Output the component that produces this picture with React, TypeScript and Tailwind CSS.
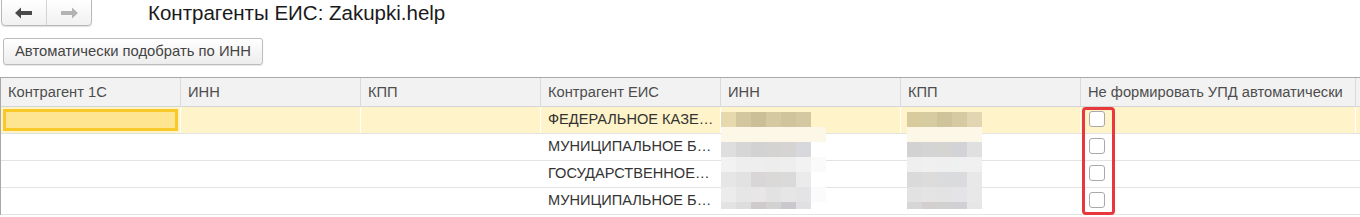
import React from 'react';

const COLS = [
    { label: 'Контрагент 1С', w: 'w-[180px]' },
    { label: 'ИНН', w: 'w-[180px]' },
    { label: 'КПП', w: 'w-[180px]' },
    { label: 'Контрагент ЕИС', w: 'w-[180px]' },
    { label: 'ИНН', w: 'w-[180px]' },
    { label: 'КПП', w: 'w-[180px]' },
    { label: 'Не формировать УПД автоматически', w: 'w-[275px]' },
];

const ROWS = [
    'ФЕДЕРАЛЬНОЕ КАЗЕ…',
    'МУНИЦИПАЛЬНОЕ Б…',
    'ГОСУДАРСТВЕННОЕ…',
    'МУНИЦИПАЛЬНОЕ Б…',
];

// blurred (pixelated) values: rows of 15px blocks
const INN_MOSAIC = [
    { h: 15, cells: ['#e6d9ae', '#d3c79f', '#cbbf98', '#d5c9a1', '#d0c49c', '#d4c8a2'] },
    { h: 15, cells: ['#fcf7e7', '#fcf7e7', '#fcf7e7', '#fcf7e7', '#fcf7e7', '#fcf7e7', '#fcf7e7'] },
    { h: 15, cells: ['#dedede', '#d6d6d6', '#d3d2d3', '#d4d3d2', '#d5d4d3', '#d7d8dc'] },
    { h: 15, cells: ['#f2f2f2', '#eeeeee', '#efeeef', '#ededed', '#eeeeee', '#f2f2f2', '#fafafa'] },
    { h: 15, cells: ['#e6e6e6', '#e2e2e2', '#d8d6d6', '#dad9d8', '#dbdada', '#ebebec'] },
    { h: 15, cells: ['#ececec', '#e6e6e6', '#e8e6e7', '#e2e2e2', '#e6e6e6', '#e4e4e6', '#fbfbfb'] },
    { h: 7, cells: ['#e3e3e3', '#dddddd', '#cfcacb', '#d2d2d1', '#cac8cc', '#e0e0e2'] },
];

const KPP_MOSAIC = [
    { h: 15, cells: ['#d8cc9f', '#d6cca1', '#cfc39b', '#d5caa2', '#e1d6b1'] },
    { h: 15, cells: ['#fcf7e7', '#fcf7e7', '#fcf7e7', '#fcf7e7', '#fcf7e7'] },
    { h: 15, cells: ['#d2d2d2', '#d4d4d4', '#d6d3d3', '#d2d3d6', '#e0e0e0'] },
    { h: 15, cells: ['#efefef', '#f0f0f0', '#efefef', '#eff0f0', '#f0f0f0'] },
    { h: 15, cells: ['#dadada', '#dedbdb', '#dadbdd', '#d9dbdd', '#e8e8e8'] },
    { h: 15, cells: ['#e2e2e2', '#e4e4e4', '#e3e3e3', '#e4e4e6', '#e8e8e8'] },
    { h: 7, cells: ['#d6d6d6', '#d3cfcf', '#d1d1d1', '#d1d1d3', '#e6e6e6'] },
];

const Mosaic = ({ rows, className }: { rows: typeof INN_MOSAIC; className: string }) => (
    <div className={`absolute flex flex-col ${className}`}>
        {rows.map((r, i) => (
            <div key={i} className="flex">
                {r.cells.map((c, j) => (
                    <div key={j} className="w-[15px]" style={{ height: r.h, background: c }} />
                ))}
            </div>
        ))}
    </div>
);

const Checkbox = () => (
    <div className="w-[16px] h-[16px] rounded-[3px] border border-[#a9a9a9] bg-white" />
);

export default function App() {
    return (
        <div className="w-[1360px] h-[217px] bg-white overflow-hidden text-[#333]" style={{ fontFamily: 'Arial, "Liberation Sans", sans-serif' }}>
            {/* top bar */}
            <div className="flex items-center h-[27px] -mt-[1px]">
                <div className="ml-[1px] flex h-[27px] border border-[#b9b9b9] rounded-b-[4px] bg-gradient-to-b from-white to-[#f1f1f1] shadow-[0_1px_1px_rgba(0,0,0,0.12)]">
                    <div className="w-[45px] flex items-center justify-center border-r border-[#d4d4d4]">
                        <svg width="18" height="12" viewBox="0 0 18 12">
                            <path d="M0 6 L6 0.5 L6 4 L17 4 L17 8 L6 8 L6 11.5 Z" fill="#4a4a4a" />
                        </svg>
                    </div>
                    <div className="w-[44px] flex items-center justify-center">
                        <svg width="18" height="12" viewBox="0 0 18 12">
                            <path d="M18 6 L12 0.5 L12 4 L1 4 L1 8 L12 8 L12 11.5 Z" fill="#b3b3b3" />
                        </svg>
                    </div>
                </div>
                <div className="ml-[56px] text-[20.5px] leading-none text-[#1a1a1a] pt-[2px] whitespace-nowrap">Контрагенты ЕИС: Zakupki.help</div>
            </div>

            {/* command bar */}
            <div className="mt-[12px] ml-[3px] flex">
                <button className="h-[27px] px-[11px] border border-[#bcbcbc] rounded-[3px] bg-gradient-to-b from-white to-[#ededed] text-[14.8px] text-[#444] shadow-[0_1px_1px_rgba(0,0,0,0.1)] whitespace-nowrap">
                    Автоматически подобрать по ИНН
                </button>
            </div>

            {/* table */}
            <div className="relative mt-[12px] border-t border-l border-[#a8a8a8]">
                <div className="flex h-[29px] bg-[#f2f2f2] border-b border-[#d5d5d5]">
                    {COLS.map((c, i) => (
                        <div key={i} className={`${c.w} shrink-0 flex items-center pl-[7px] text-[14.7px] text-[#4d4d4d] border-r border-[#dadada] whitespace-nowrap overflow-hidden`}>
                            {c.label}
                        </div>
                    ))}
                    <div className="flex-1" />
                </div>
                {ROWS.map((name, r) => (
                    <div key={r} className={`flex h-[27px] border-b border-[#e3e3e3] ${r === 0 ? 'bg-[#fef3c9]' : 'bg-white'}`}>
                        {COLS.map((c, i) => (
                            <div key={i} className={`${c.w} shrink-0 flex items-center ${r === 0 ? 'border-r border-white' : ''} ${i === 0 && r === 0 ? 'p-[2px]' : ''}`}>
                                {i === 0 && r === 0 && (
                                    <div className="w-full h-full border-[3px] border-[#f9c92a] bg-[#fde591]" />
                                )}
                                {i === 3 && <span className="pl-[7px] text-[14.6px] text-[#333] whitespace-nowrap">{name}</span>}
                                {i === 6 && (
                                    <div className="pl-[8px] -mt-[2px]">
                                        <Checkbox />
                                    </div>
                                )}
                            </div>
                        ))}
                        <div className="flex-1" />
                    </div>
                ))}
                <Mosaic rows={INN_MOSAIC} className="left-[720px] top-[34px]" />
                <Mosaic rows={KPP_MOSAIC} className="left-[906px] top-[34px]" />
                {/* red highlight around checkboxes */}
                <div className="absolute left-[1081px] top-[29px] w-[33px] h-[108px] border-[3px] border-[#e8383d] rounded-[4px]" />
            </div>
        </div>
    );
}
